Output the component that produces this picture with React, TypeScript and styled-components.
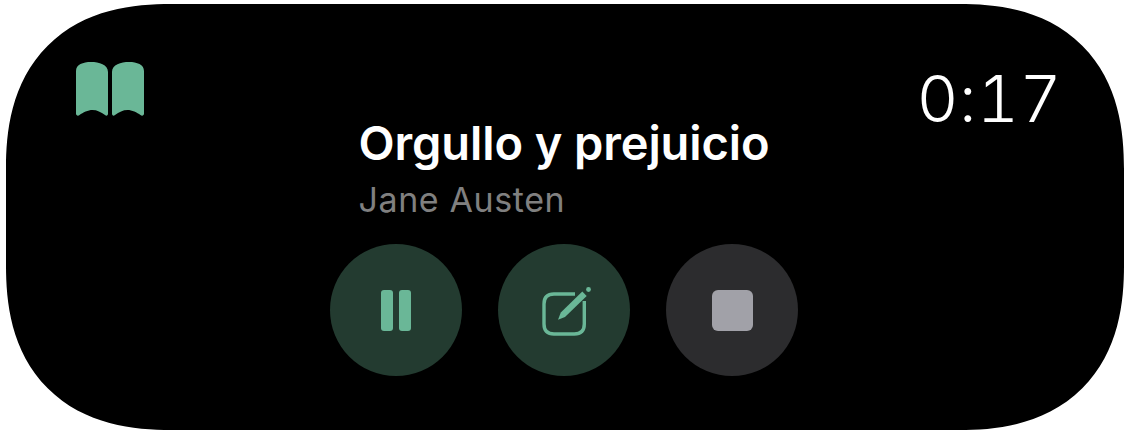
import styled, { createGlobalStyle } from 'styled-components';

const GlobalStyle = createGlobalStyle`
	html, body {
		margin: 0;
		padding: 0;
		background: #fff;
	}
`;

const Page = styled.div`
	width: 1130px;
	height: 434px;
	padding: 4px 6px;
	box-sizing: border-box;
	background: #fff;
	font-family: Inter, "Liberation Sans", sans-serif;
`;

const Island = styled.div`
	width: 100%;
	height: 100%;
	padding: 58px 70px 0;
	box-sizing: border-box;
	display: flex;
	flex-direction: column;
	background: #000;
	border-radius: 165px;
	corner-shape: superellipse(1.25);
`;

const TopRow = styled.div`
	height: 55px;
	display: flex;
	justify-content: space-between;
	align-items: flex-start;
`;

const Timer = styled.div`
	margin-top: 2px;
	margin-right: -8px;
	font-size: 65px;
	font-weight: 300;
	line-height: 70px;
	letter-spacing: 0.5px;
	font-variant-numeric: tabular-nums;
	color: #fff;
`;

const Main = styled.div`
	padding-right: 2px;
	display: flex;
	flex-direction: column;
	align-items: center;
`;

const TextBlock = styled.div`
	display: flex;
	flex-direction: column;
`;

const Title = styled.div`
	font-size: 47px;
	font-weight: 600;
	line-height: 52px;
	letter-spacing: -0.1px;
	color: #fff;
`;

const Author = styled.div`
	margin-top: 11px;
	font-size: 34px;
	line-height: 40px;
	letter-spacing: 0.6px;
	color: #808080;
`;

const Controls = styled.div`
	margin-top: 24px;
	display: flex;
	gap: 36px;
`;

const RoundButton = styled.button<{ $tone: 'green' | 'gray' }>`
	width: 132px;
	height: 132px;
	padding: 0;
	border: 0;
	border-radius: 50%;
	display: flex;
	align-items: center;
	justify-content: center;
	background: ${({ $tone }) => ($tone === 'green' ? '#233b30' : '#2c2c2e')};
`;

const PauseBars = styled.div`
	display: flex;
	gap: 6px;
`;

const PauseBar = styled.div`
	width: 12px;
	height: 41px;
	border-radius: 3px;
	background: #6ab797;
`;

const StopSquare = styled.div`
	width: 41px;
	height: 41px;
	border-radius: 6px;
	background: #a1a1a8;
`;

const ComposeSvg = styled.svg`
	overflow: visible;
`;

const BookIcon = () => (
	<svg width="68" height="54" viewBox="0 0 68 54" fill="#6ab797">
		<path d="M0 9C0 2.5 7 0 15 0C23 0 32 2.5 32 10V51.5C32 53.5 30.5 54.3 29 53C25 50 21 48 16.5 48C12 48 7 50.5 3.5 53C2 54.3 0 53.5 0 51.5Z" />
		<path d="M68 9C68 2.5 61 0 53 0C45 0 36 2.5 36 10V51.5C36 53.5 37.5 54.3 39 53C43 50 47 48 51.5 48C56 48 61 50.5 64.5 53C66 54.3 68 53.5 68 51.5Z" />
	</svg>
);

const ComposeIcon = () => (
	<ComposeSvg width="50" height="50" viewBox="-3 -2 50 50" fill="none">
		<path
			d="M33 7H12C5.5 7 2 10.5 2 17V37C2 43.5 5.5 47 12 47H32.3C38.8 47 42.3 43.5 42.3 37V14"
			stroke="#6ab797"
			strokeWidth="3.4"
		/>
		<path d="M16 32.7L18.8 25.5L40.3 4.6L44.7 9L23 30Z" fill="#6ab797" />
		<circle cx="46.5" cy="2.5" r="2.4" fill="#6ab797" />
	</ComposeSvg>
);

const App = () => {
	return <Page>
		<GlobalStyle />
		<Island>
			<TopRow>
				<BookIcon />
				<Timer>0:17</Timer>
			</TopRow>
			<Main>
				<TextBlock>
					<Title>Orgullo y prejuicio</Title>
					<Author>Jane Austen</Author>
				</TextBlock>
				<Controls>
					<RoundButton $tone="green">
						<PauseBars>
							<PauseBar />
							<PauseBar />
						</PauseBars>
					</RoundButton>
					<RoundButton $tone="green">
						<ComposeIcon />
					</RoundButton>
					<RoundButton $tone="gray">
						<StopSquare />
					</RoundButton>
				</Controls>
			</Main>
		</Island>
	</Page>;
};

export default App;
